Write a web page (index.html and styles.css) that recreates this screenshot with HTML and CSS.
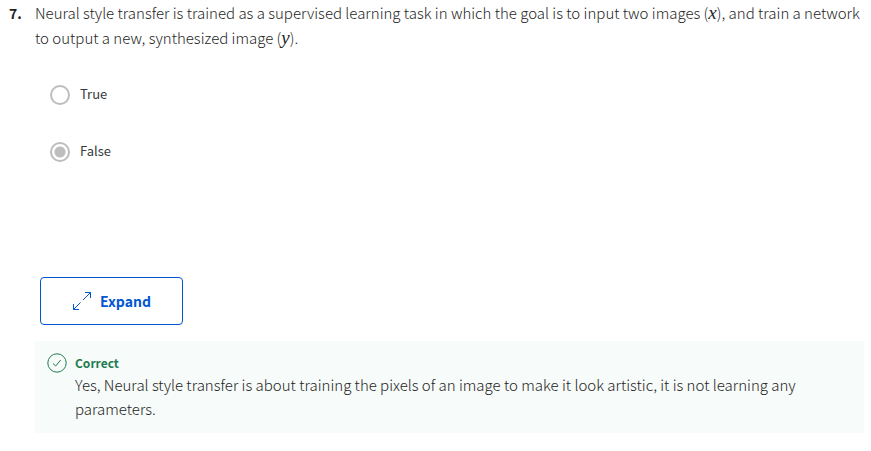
FILE: index.html
```html
<!DOCTYPE html>
<html lang="en">
<head>
<meta charset="utf-8">
<title>Quiz question</title>
<link rel="stylesheet" href="styles.css">
</head>
<body>
<main class="question">
  <div class="number">7.</div>
  <div class="content">
    <p class="prompt" id="prompt">Neural style transfer is trained as a supervised learning task in which the goal is to input two images (<i class="math">x</i>), and train a network <br>to output a new, synthesized image (<i class="math">y</i>).</p>
    <div class="options" role="radiogroup" aria-labelledby="prompt">
      <label class="option"><input type="radio" name="answer"><span>True</span></label>
      <label class="option"><input type="radio" name="answer" checked><span>False</span></label>
    </div>
    <button class="expand" type="button">
      <svg width="20" height="20" viewBox="0 0 20 20" fill="none" stroke="currentColor" aria-hidden="true"><path d="M1.500 18.500 8.500 11.500M11 9l7.500-7.500M13 1.500h5.500v5.500M1.500 13v5.500h5.500"/></svg>
      <span>Expand</span>
    </button>
    <section class="feedback">
      <svg width="20" height="20" viewBox="0 0 20 20" fill="none" stroke="currentColor" aria-hidden="true"><circle cx="10" cy="10" r="9.200"/><path d="m6 10.500 2.700 2.500 5-6"/></svg>
      <div>
        <h2 class="verdict">Correct</h2>
        <p class="explanation">Yes, Neural style transfer is about training the pixels of an image to make it look artistic, it is not learning any parameters.</p>
      </div>
    </section>
  </div>
</main>
</body>
</html>
```
FILE: styles.css
```css
* { box-sizing: border-box; }
body {
  margin: 0;
  background: #fff;
  color: #1f1f1f;
  font-family: "Source Sans Pro", "Noto Sans CJK SC", sans-serif;
  font-size: 14px;
  line-height: 24px;
}
p, h2 { margin: 0; }
.question {
  display: flex;
  padding: 0 7px 18px 9px;
}
.number {
  flex: 0 0 26px;
  font-weight: 700;
  line-height: 27px;
}
.content { flex: 1; min-width: 0; }
.prompt, .explanation {
  font-size: 15px;
  font-weight: 300;
}
.prompt { line-height: 25px; }
.math {
  font-family: "Liberation Serif", serif;
  font-size: 19px;
  line-height: 1;
}
.options {
  display: flex;
  flex-direction: column;
  gap: 33px;
  padding: 33px 15px 0;
}
.option {
  display: flex;
  align-items: center;
  align-self: flex-start;
  gap: 10px;
  color: #373a3c;
  font-size: 13px;
  line-height: 22px;
}
.option span { padding-bottom: 2px; }
.option input {
  appearance: none;
  width: 20px;
  height: 20px;
  margin: 0;
  border: 2px solid #bdbdbd;
  border-radius: 50%;
}
.option input:checked {
  background: radial-gradient(circle, #bdbdbd 5px, transparent 6px);
}
.expand {
  display: flex;
  align-items: center;
  gap: 8px;
  height: 48px;
  margin: 113px 5px 16px;
  padding: 0 31px;
  border: 1px solid #0056d2;
  border-radius: 4px;
  background: #fff;
  color: #0056d2;
  font: inherit;
  font-weight: 700;
}
.feedback {
  display: flex;
  gap: 8px;
  padding: 12px;
  background: #f7fbf9;
}
.feedback svg { flex: none; color: #1d7c50; }
.verdict {
  color: #1d7c50;
  font-size: 12px;
  line-height: 20px;
}
```
